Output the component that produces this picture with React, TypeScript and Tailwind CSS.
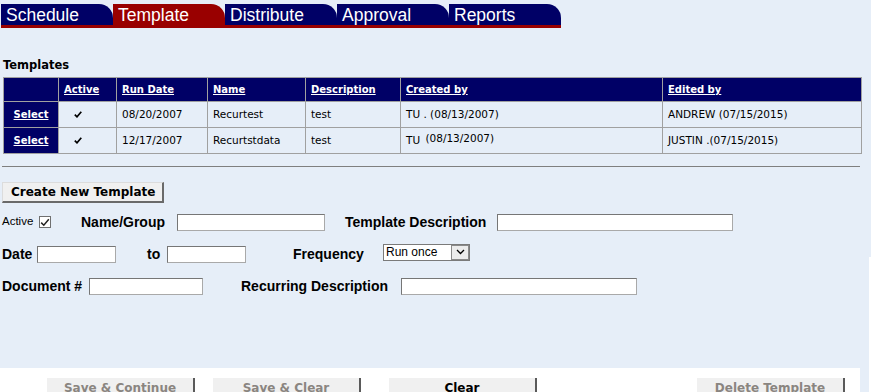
import React from "react";

const tabs = [
  { label: "Schedule", active: false },
  { label: "Template", active: true },
  { label: "Distribute", active: false },
  { label: "Approval", active: false },
  { label: "Reports", active: false },
];

const dv = { fontFamily: '"DejaVu Sans", Verdana, sans-serif' };
const ar = { fontFamily: '"Liberation Sans", Arial, sans-serif' };

function Input({ w }: { w: string }) {
  return (
    <div
      className={`${w} h-[17px] bg-white border border-[#a9a9a9] border-t-[#767676] border-l-[#767676]`}
    />
  );
}

function HeadCell({ children }: { children?: React.ReactNode }) {
  return (
    <div className="bg-[#000066] text-white font-bold underline text-[10px] flex items-center pl-[5px]" style={dv}>
      {children}
    </div>
  );
}

function Cell({ children, className = "" }: { children?: React.ReactNode; className?: string }) {
  return (
    <div className={`bg-[#e6eef8] text-black text-[10.5px] flex items-center pl-[5px] whitespace-pre ${className}`} style={dv}>
      {children}
    </div>
  );
}

function SelectCell() {
  return (
    <div className="bg-[#000066] text-white font-bold underline text-[10px] flex items-center justify-center" style={dv}>
      Select
    </div>
  );
}

function Check() {
  return (
    <Cell className="pl-[15px]">
      <svg width="8" height="7" viewBox="0 0 8 7">
        <path d="M0.8 3.6 L3 5.8 L7.3 0.8" stroke="#000" strokeWidth="1.7" fill="none" />
      </svg>
    </Cell>
  );
}

function BottomButton({ label, disabled, ml }: { label: string; disabled?: boolean; ml: string }) {
  return (
    <div
      className={`${ml} w-[148px] h-[24px] bg-[#f0f0f0] border-r-2 border-r-[#5a5a5a] pt-[3px] text-center text-[12px] font-bold leading-[14px] ${
        disabled ? "text-[#8a8580]" : "text-black"
      }`}
      style={dv}
    >
      {label}
    </div>
  );
}

export default function App() {
  return (
    <div className="relative w-[871px] h-[392px] bg-[#e6eef8] overflow-hidden flex flex-col">
      {/* Tabs */}
      <div className="pt-[4px] pl-[1px]">
        <div className="flex">
          {tabs.map((t) => (
            <div
              key={t.label}
              className={`w-[112px] h-[21px] rounded-tr-[14px] pl-[5px] pt-[1px] text-white text-[17.5px] leading-[20px] ${
                t.active ? "bg-[#990000]" : "bg-[#000066]"
              }`}
              style={ar}
            >
              {t.label}
            </div>
          ))}
        </div>
        <div className="w-[560px] h-[3px] bg-[#990000]" />
      </div>

      {/* Templates label */}
      <div className="mt-[30px] pl-[3px] h-[14px] text-[11.5px] leading-[14px] font-bold text-black" style={dv}>
        Templates
      </div>

      {/* Table */}
      <div className="mt-[5px] ml-[3px] w-[859px] grid grid-cols-[54px_57px_90px_97px_94px_261px_198px] grid-rows-[23px_25px_25px] gap-px p-px bg-[#a0a0a0]">
        <HeadCell />
        <HeadCell>Active</HeadCell>
        <HeadCell>Run Date</HeadCell>
        <HeadCell>Name</HeadCell>
        <HeadCell>Description</HeadCell>
        <HeadCell>Created by</HeadCell>
        <HeadCell>Edited by</HeadCell>

        <SelectCell />
        <Check />
        <Cell>08/20/2007</Cell>
        <Cell>Recurtest</Cell>
        <Cell>test</Cell>
        <Cell>{"TU . (08/13/2007)"}</Cell>
        <Cell>ANDREW (07/15/2015)</Cell>

        <SelectCell />
        <Check />
        <Cell>12/17/2007</Cell>
        <Cell>Recurtstdata</Cell>
        <Cell>test</Cell>
        <Cell>
          {"TU "}
          <span className="ml-[2px] relative -top-[2px]">(08/13/2007)</span>
        </Cell>
        <Cell>{"JUSTIN .(07/15/2015)"}</Cell>
      </div>

      {/* HR */}
      <div className="mt-[12px] ml-[2px] w-[858px] border-t border-[#7f7f7f]" />

      {/* Create button */}
      <div className="mt-[15px] ml-[2px]">
        <div
          className="w-[162px] h-[21px] bg-[#f0f0f0] border border-[#dcdcdc] border-r-2 border-b-2 border-r-[#6a6a6a] border-b-[#6a6a6a] flex items-center pl-[8px] text-[12px] font-bold text-black"
          style={dv}
        >
          Create New Template
        </div>
      </div>

      {/* Form rows */}
      <div className="mt-[3px] flex flex-col text-black" style={ar}>
        <div className="h-[32px] flex items-center pl-[2px]">
          <span className="w-[37px] text-[11.5px]">Active</span>
          <div className="w-[12px] h-[12px] bg-white border border-[#707070] flex items-center justify-center">
            <svg width="10" height="9" viewBox="0 0 10 9">
              <path d="M1.2 4.6 L3.8 7.2 L8.8 1.2" stroke="#222" strokeWidth="1.5" fill="none" />
            </svg>
          </div>
          <span className="ml-[30px] w-[96px] text-[14px] font-bold">Name/Group</span>
          <Input w="w-[148px]" />
          <span className="ml-[20px] w-[152px] text-[14px] font-bold">Template Description</span>
          <Input w="w-[236px]" />
        </div>

        <div className="h-[32px] flex items-center pl-[2px]">
          <span className="w-[35px] text-[14px] font-bold">Date</span>
          <Input w="w-[79px]" />
          <span className="ml-[31px] w-[20px] text-[14px] font-bold">to</span>
          <Input w="w-[79px]" />
          <span className="ml-[47px] w-[90px] text-[14px] font-bold">Frequency</span>
          <div className="mb-[4px] w-[87px] h-[17px] bg-white border border-[#7a7a7a] flex items-center justify-between">
            <span className="pl-[2px] text-[12px] leading-[15px]">Run once</span>
            <div className="w-[18px] h-[15px] bg-[#ececec] border border-[#8a8a8a] flex items-center justify-center">
              <svg width="9" height="6" viewBox="0 0 9 6">
                <path d="M1 1 L4.5 4.5 L8 1" stroke="#000" strokeWidth="1.3" fill="none" />
              </svg>
            </div>
          </div>
        </div>

        <div className="h-[32px] flex items-center pl-[2px]">
          <span className="w-[87px] text-[14px] font-bold">Document #</span>
          <Input w="w-[114px]" />
          <span className="ml-[38px] w-[160px] text-[14px] font-bold">Recurring Description</span>
          <Input w="w-[236px]" />
        </div>
      </div>

      {/* Bottom button bar */}
      <div className="mt-auto w-[860px] h-[24px] bg-white pt-[10px] flex items-start">
        <BottomButton label="Save & Continue" disabled ml="ml-[47px]" />
        <BottomButton label="Save & Clear" disabled ml="ml-[18px]" />
        <BottomButton label="Clear" ml="ml-[28px]" />
        <BottomButton label="Delete Template" disabled ml="ml-[160px]" />
      </div>

      <div className="absolute right-0 top-[257px] w-[2px] h-[135px] bg-white" />
    </div>
  );
}
